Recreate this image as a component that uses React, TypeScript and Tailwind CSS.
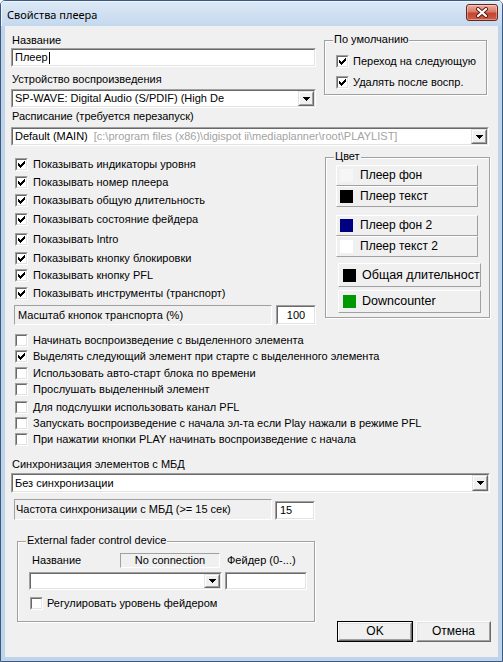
import React from "react";

function Check({ checked }: { checked?: boolean }) {
  return (
    <div className="w-[13px] h-[13px] shrink-0 border border-t-[#a0a0a0] border-l-[#a0a0a0] border-b-white border-r-white">
      <div className="relative w-full h-full border border-t-[#696969] border-l-[#696969] border-b-[#e3e3e3] border-r-[#e3e3e3] bg-white">
        {checked && (
          <svg width="9" height="9" viewBox="0 0 9 9" className="absolute left-0 top-0" shapeRendering="crispEdges">
            <path
              d="M7 1h1v1h-1z M6 2h2v1h-2z M1 3h1v1h-1z M5 3h3v1h-3z M1 4h2v1h-2z M4 4h3v1h-3z M1 5h5v1h-5z M2 6h3v1h-3z M3 7h1v1h-1z"
              fill="#000"
            />
          </svg>
        )}
      </div>
    </div>
  );
}

function Sunken({ className, inner, children }: { className: string; inner?: string; children?: React.ReactNode }) {
  return (
    <div className={"border border-t-[#a0a0a0] border-l-[#a0a0a0] border-b-white border-r-white " + className}>
      <div
        className={
          "w-full h-full border border-t-[#696969] border-l-[#696969] border-b-[#e3e3e3] border-r-[#e3e3e3] bg-white flex items-center overflow-hidden whitespace-nowrap " +
          (inner || "")
        }
      >
        {children}
      </div>
    </div>
  );
}

function DropBtn() {
  return (
    <div className="w-[16px] h-full shrink-0 border border-t-[#e3e3e3] border-l-[#e3e3e3] border-b-[#696969] border-r-[#696969] bg-[#f0f0f0]">
      <div className="w-full h-full border border-t-white border-l-white border-b-[#a0a0a0] border-r-[#a0a0a0] flex items-center justify-center">
        <svg width="7" height="4" viewBox="0 0 7 4" shapeRendering="crispEdges">
          <path d="M0 0H7V1H6V2H5V3H4V4H3V3H2V2H1V1H0Z" fill="#000" />
        </svg>
      </div>
    </div>
  );
}

function Combo({ className, children }: { className: string; children?: React.ReactNode }) {
  return (
    <Sunken className={className}>
      <div className="flex-1 h-full flex items-center pl-[2px] overflow-hidden whitespace-nowrap">{children}</div>
      <DropBtn />
    </Sunken>
  );
}

function Static({ className, children }: { className: string; children?: React.ReactNode }) {
  return (
    <div
      className={
        "border border-t-[#a0a0a0] border-l-[#a0a0a0] border-b-white border-r-white flex items-center whitespace-nowrap overflow-hidden " +
        className
      }
    >
      {children}
    </div>
  );
}

function Row({ checked, label, className }: { checked?: boolean; label: string; className: string }) {
  return (
    <div className={"flex items-center gap-[5px] whitespace-nowrap " + className}>
      <Check checked={checked} />
      <span>{label}</span>
    </div>
  );
}

function ColorBtn({ color, label, className, big }: { color: string; label: string; className: string; big?: boolean }) {
  return (
    <div className={"border border-t-white border-l-white border-b-[#a0a0a0] border-r-[#a0a0a0] bg-[#f0f0f0] " + className}>
      <div
        className={
          "w-full h-full flex items-center overflow-hidden whitespace-nowrap " +
          (big ? "pl-[4px] gap-[6px] text-[12.5px]" : "pl-[3px] gap-[7px] text-[12px]")
        }
      >
        <div className="w-[13px] h-[13px] shrink-0" style={{ background: color }} />
        <span>{label}</span>
      </div>
    </div>
  );
}

function Group({ title, className, children }: { title: string; className: string; children?: React.ReactNode }) {
  return (
    <div className={"relative border border-[#a0a0a0] shadow-[inset_1px_1px_0_#fff,1px_1px_0_#fff] " + className}>
      <span className="absolute -top-[8px] left-[8px] bg-[#f0f0f0] px-[1px] leading-[13px] whitespace-nowrap">{title}</span>
      {children}
    </div>
  );
}

function PushBtn({ label, isDefault, className }: { label: string; isDefault?: boolean; className: string }) {
  const btn = (
    <div className="w-full h-full border border-t-white border-l-white border-b-[#696969] border-r-[#696969] bg-[#f0f0f0]">
      <div className="w-full h-full border border-t-[#e3e3e3] border-l-[#e3e3e3] border-b-[#a0a0a0] border-r-[#a0a0a0] flex items-center justify-center text-[12px]">
        {label}
      </div>
    </div>
  );
  return isDefault ? <div className={"border border-black " + className}>{btn}</div> : <div className={className}>{btn}</div>;
}

export default function App() {
  const showRows: [string, number][] = [
    ["Показывать индикаторы уровня", 18],
    ["Показывать номер плеера", 18],
    ["Показывать общую длительность", 18],
    ["Показывать состояние фейдера", 20],
    ["Показывать Intro", 20],
    ["Показывать кнопку блокировки", 18],
    ["Показывать кнопку PFL", 17],
    ["Показывать инструменты (транспорт)", 18],
  ];
  return (
    <div className="w-[503px] h-[662px] rounded-t-[5px] border border-[#3b5a7d] bg-[#bfd4eb] flex flex-col font-['Liberation_Sans',Arial,sans-serif] text-[11px] leading-[13px] text-black overflow-hidden">
      {/* title bar */}
      <div className="h-[25px] shrink-0 flex items-start justify-between bg-[linear-gradient(to_bottom,#dde9f6,#c4d8ee)] shadow-[inset_1px_1px_0_#eef4fb]">
        <span className="mt-[6px] ml-[6px] font-['Noto_Sans',sans-serif] text-[11px] leading-[15px] text-black">Свойства плеера</span>
        <div className="mt-[3px] mr-[4px] w-[32px] h-[17px] rounded-[3px] border border-[#6b2418] bg-[linear-gradient(to_bottom,#eab0a2,#d87a66_45%,#c4452f_55%,#cf5d45)] shadow-[inset_0_0_0_1px_rgba(255,255,255,0.35)] flex items-center justify-center">
          <svg width="14" height="11" viewBox="0 0 14 11">
            <path d="M3 2 L11 9 M11 2 L3 9" stroke="#5a1a12" strokeWidth="4" strokeLinecap="round" />
            <path d="M3 2 L11 9 M11 2 L3 9" stroke="#ffffff" strokeWidth="2.2" strokeLinecap="round" />
          </svg>
        </div>
      </div>

      {/* client */}
      <div className="mx-[4px] mb-[4px] w-[493px] h-[631px] bg-[#f0f0f0] flex flex-col">
        {/* section A */}
        <div className="flex items-start">
          <div className="ml-[6px] w-[305px] flex flex-col">
            <div className="mt-[8px] h-[13px] pl-[1px] whitespace-nowrap">Название</div>
            <Sunken className="mt-[1px] h-[19px] w-full" inner="pl-[2px]">
              <span>Плеер</span>
              <span className="w-[1px] h-[12px] bg-black ml-[1px]" />
            </Sunken>
            <div className="mt-[6px] h-[13px] pl-[1px] whitespace-nowrap">Устройство воспроизведения</div>
            <Combo className="mt-[3px] h-[19px] w-full">SP-WAVE: Digital Audio (S/PDIF) (High De</Combo>
            <div className="mt-[2px] h-[13px] pl-[1px] whitespace-nowrap">Расписание (требуется перезапуск)</div>
          </div>
          <Group title="По умолчанию" className="ml-[8px] mt-[14px] w-[163px] h-[55px]">
            <div className="flex flex-col pl-[11px]">
              <div className="mt-[12px] h-[16px] flex items-center gap-[4px] whitespace-nowrap">
                <Check checked />
                <span>Переход на следующую</span>
              </div>
              <div className="mt-[5px] h-[16px] flex items-center gap-[4px] whitespace-nowrap">
                <Check checked />
                <span>Удалять после воспр.</span>
              </div>
            </div>
          </Group>
        </div>

        {/* section B */}
        <Combo className="mt-[4px] ml-[6px] w-[478px] h-[19px]">
          <span>Default (MAIN)</span>
          <span className="ml-[6px] text-[#a3a3a3]">[c:\program files (x86)\digispot ii\mediaplanner\root\PLAYLIST]</span>
        </Combo>

        {/* section C */}
        <div className="flex items-start">
          <div className="ml-[9px] w-[302px] flex flex-col">
            <div className="mt-[9px]" />
            {showRows.map(([l, h]) => (
              <div key={l} className="flex items-center gap-[5px] pl-[1px] whitespace-nowrap" style={{ height: h }}>
                <Check checked />
                <span>{l}</span>
              </div>
            ))}
            <div className="mt-[3px] h-[20px] flex">
              <Static className="w-[258px] h-full pl-[3px]">Масштаб кнопок транспорта (%)</Static>
              <Sunken className="ml-[4px] w-[40px] h-full" inner="justify-center">
                <span>100</span>
              </Sunken>
            </div>
          </div>
          <Group title="Цвет" className="ml-[9px] mt-[11px] w-[165px] h-[161px]">
            <div className="flex flex-col">
              <ColorBtn className="mt-[7px] ml-[10px] w-[142px] h-[21px]" color="#f6f6f6" label="Плеер фон" />
              <ColorBtn className="ml-[10px] w-[142px] h-[21px]" color="#000000" label="Плеер текст" />
              <ColorBtn className="mt-[8px] ml-[10px] w-[142px] h-[21px]" color="#000080" label="Плеер фон 2" />
              <ColorBtn className="ml-[10px] w-[142px] h-[21px]" color="#ffffff" label="Плеер текст 2" />
              <ColorBtn big className="mt-[6px] ml-[12px] w-[143px] h-[24px]" color="#000000" label="Общая длительность" />
              <ColorBtn big className="mt-[3px] ml-[12px] w-[143px] h-[23px]" color="#009a00" label="Downcounter" />
            </div>
          </Group>
        </div>

        {/* section D */}
        <div className="ml-[10px] flex flex-col">
          <Row className="mt-[7px] h-[16px]" label="Начинать воспроизведение с выделенного элемента" />
          <Row className="h-[16px]" checked label="Выделять следующий элемент при старте с выделенного элемента" />
          <Row className="mt-[1px] h-[16px]" label="Использовать авто-старт блока по времени" />
          <Row className="h-[16px]" label="Прослушать выделенный элемент" />
          <Row className="mt-[2px] h-[16px]" label="Для подслушки использовать канал PFL" />
          <Row className="h-[16px]" label="Запускать воспроизведение с начала эл-та если Play нажали в режиме PFL" />
          <Row className="h-[16px]" label="При нажатии кнопки PLAY начинать воспроизведение с начала" />
        </div>

        {/* section E */}
        <div className="mt-[11px] ml-[7px] h-[13px] whitespace-nowrap">Синхронизация элементов с МБД</div>
        <Combo className="mt-[2px] ml-[6px] w-[479px] h-[20px]">Без синхронизации</Combo>
        <div className="mt-[6px] ml-[9px] flex items-start">
          <Static className="w-[258px] h-[21px] pl-[1px]">Частота синхронизации с МБД (&gt;= 15 сек)</Static>
          <Sunken className="ml-[3px] mt-[2px] w-[40px] h-[19px]" inner="pl-[3px]">
            <span>15</span>
          </Sunken>
        </div>

        {/* section F */}
        <div className="flex items-start">
          <Group title="External fader control device" className="mt-[21px] ml-[12px] w-[298px] h-[81px]">
            <div className="flex flex-col">
              <div className="mt-[11px] h-[15px] flex items-center whitespace-nowrap">
                <span className="ml-[14px] w-[88px]">Название</span>
                <Static className="w-[100px] h-full justify-center">No connection</Static>
                <span className="ml-[7px]">Фейдер (0-...)</span>
              </div>
              <div className="mt-[4px] h-[18px] flex">
                <Combo className="ml-[11px] w-[193px] h-full" />
                <Sunken className="ml-[3px] w-[82px] h-full" />
              </div>
              <div className="mt-[5px] h-[16px] ml-[12px] flex items-center gap-[4px] whitespace-nowrap">
                <Check />
                <span>Регулировать уровень фейдером</span>
              </div>
            </div>
          </Group>
          <div className="ml-[22px] mt-[101px] flex gap-[3px]">
            <PushBtn isDefault label="OK" className="w-[76px] h-[21px]" />
            <PushBtn label="Отмена" className="w-[75px] h-[21px]" />
          </div>
        </div>
      </div>
    </div>
  );
}
